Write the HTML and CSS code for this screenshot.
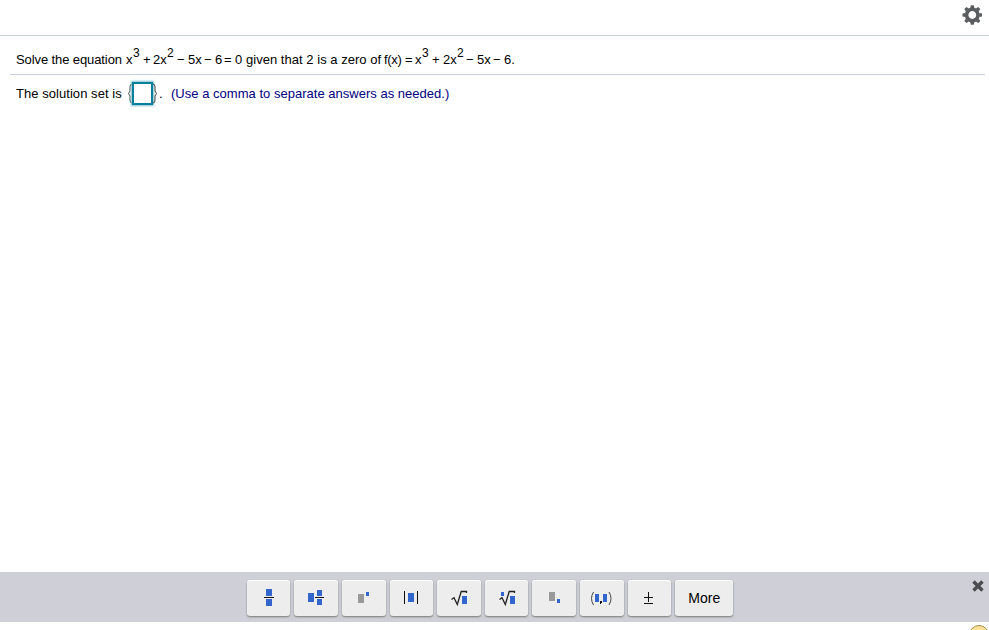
FILE: index.html
```html
<!DOCTYPE html>
<html lang="en">
  <head>
    <meta charset="utf-8" />
    <title>Homework</title>
    <link rel="stylesheet" href="styles.css" />
  </head>
  <body>
    <header class="topbar">
      <svg class="gear" width="20" height="20" viewBox="-10.3 -10 20 20">
        <circle r="5.7" fill="none" stroke="#5b5c5f" stroke-width="3.6" />
        <g fill="#5b5c5f">
          <path id="tooth" d="M-2.1 -7 L-1.4 -9.8 H1.4 L2.1 -7Z" />
          <use href="#tooth" transform="rotate(45)" />
          <use href="#tooth" transform="rotate(90)" />
          <use href="#tooth" transform="rotate(135)" />
          <use href="#tooth" transform="rotate(180)" />
          <use href="#tooth" transform="rotate(225)" />
          <use href="#tooth" transform="rotate(270)" />
          <use href="#tooth" transform="rotate(315)" />
        </g>
      </svg>
    </header>

    <main>
      <div class="question">
        <span class="lead">Solve the equation</span>
        <span>x</span><sup>3</sup><span>+</span><span>2x</span><sup>2</sup>
        <span>−</span><span>5x</span><span>−</span><span>6</span><span>=</span><span>0</span>
        <span class="given">given that 2 is a zero of</span>
        <span class="func">f(x)</span><span>=</span><span>x</span><sup>3</sup><span>+</span><span>2x</span><sup>2</sup>
        <span>−</span><span>5x</span><span>−</span><span>6.</span>
      </div>
      <div class="answer">
        <span class="label">The solution set is</span>
        <span class="set">
          <svg class="brace" width="4" height="21" viewBox="0 0 4 21"><path d="M4 1Q2 1 2 4V8L.5 10.5L2 13V17Q2 20 4 20" /></svg>
          <input class="box" type="text" />
          <svg class="brace" width="4" height="21" viewBox="0 0 4 21"><path d="M0 1Q2 1 2 4V8L3.5 10.5L2 13V17Q2 20 0 20" /></svg>
        </span>
        <span class="dot">.</span>
        <span class="hint">(Use a comma to separate answers as needed.)</span>
      </div>
    </main>

    <footer class="palette">
      <div class="keys">
        <button class="key">
          <svg width="43" height="36"><path class="blue" d="M19 9h6v7h-6zM19 19h6v7h-6z" /><path class="ink" d="M17 17h10v1H17z" /></svg>
        </button>
        <button class="key">
          <svg width="43" height="36"><path class="blue" d="M14 13h6v9h-6zM23 10h5v6h-5zM23 19h5v6h-5z" /><path class="ink" d="M21 17h9v1h-9z" /></svg>
        </button>
        <button class="key">
          <svg width="43" height="36"><path class="gray" d="M16 14h6v9h-6z" /><path class="blue" d="M24 12h3v4h-3z" /></svg>
        </button>
        <button class="key">
          <svg width="43" height="36"><path class="ink" d="M14 11h1v13h-1zM27 11h1v13h-1z" /><path class="blue" d="M18 13h6v9h-6z" /></svg>
        </button>
        <button class="key">
          <svg width="43" height="36"><path class="root" d="M14.5 19.5L17 17.8L20.3 24.5L24.2 11.5H29.5V13" /><path class="blue" d="M25 16h5v8h-5z" /></svg>
        </button>
        <button class="key">
          <svg width="43" height="36"><path class="root" d="M14.5 19.5L17 17.8L20.3 24.5L24.2 11.5H29.5V13" /><path class="blue" d="M16 12h3v4h-3zM25 16h5v8h-5z" /></svg>
        </button>
        <button class="key">
          <svg width="43" height="36"><path class="gray" d="M17 12h6v9h-6z" /><path class="blue" d="M25 19h3v4h-3z" /></svg>
        </button>
        <button class="key">
          <svg width="43" height="36"><path class="paren" d="M13.5 12Q9.5 18.5 13.5 25M29 12Q33 18.5 29 25" /><path class="blue" d="M15 14h4v8h-4zM23 14h4v8h-4z" /><path class="ink" d="M20 21h2v2h-1v1h-1z" /></svg>
        </button>
        <button class="key">
          <svg width="43" height="36"><path class="ink" d="M16 17h9v1h-9zM20 12h1v10h-1zM16 23h9v1h-9z" /></svg>
        </button>
        <button class="key more">More</button>
      </div>
      <svg class="close" width="12" height="12" viewBox="0 0 12 12"><path d="M1.5 1.5L10.5 10.5M10.5 1.5L1.5 10.5" /></svg>
    </footer>
    <div class="below"><span class="badge"></span></div>
  </body>
</html>
```

FILE: styles.css
```css
* {
  box-sizing: border-box;
}
body {
  display: flex;
  flex-direction: column;
  height: 630px;
  margin: 0;
  overflow: hidden;
  background: #fff;
  color: #000;
  font-family: "Liberation Sans", Arial, sans-serif;
  font-size: 13px;
}

/* top bar */
.topbar {
  display: flex;
  justify-content: flex-end;
  height: 36px;
  padding: 5px 7px 0 0;
  border-bottom: 1px solid #c9cede;
}

/* exercise */
main {
  flex: 1;
  padding: 0 4px 0 10px;
}
.question {
  display: grid;
  grid-template-columns:
    110px 7px 10px 10px 14px 10px 11px 16px 11px 9px 11px 11px
    138px 21px 10px 7px 10px 11px 14px 9px 11px 16px 11px 12px;
  height: 39px;
  padding: 16px 0 0 6px;
  line-height: 15px;
  white-space: nowrap;
  border-bottom: 1px solid #c6cddb;
}
.lead {
  letter-spacing: -0.1px;
}
.given {
  letter-spacing: 0.03px;
}
.func {
  letter-spacing: -0.3px;
}
sup {
  font-size: 12px;
  line-height: 15px;
  position: relative;
  top: -6px;
  vertical-align: baseline;
}
.answer {
  display: flex;
  align-items: center;
  height: 36px;
  padding-left: 6px;
  white-space: nowrap;
}
.label {
  width: 112px;
  letter-spacing: 0.05px;
}
.set {
  display: flex;
  align-items: center;
  width: 31px;
}
.brace {
  flex: none;
  fill: none;
  stroke: #444;
}
.box {
  width: 21px;
  height: 23px;
  margin: 0;
  padding: 0;
  border: 2px solid #087f9c;
  outline: none;
  box-shadow: 0 0 2px 1px #7fc0cd;
}
.dot {
  width: 12px;
}
.hint {
  color: #00007f;
  letter-spacing: 0.02px;
}

/* math palette */
.palette {
  display: flex;
  justify-content: space-between;
  height: 50px;
  padding: 8px 5px 0 246.65px;
  background: #cfd0d7;
}
.keys {
  display: flex;
  gap: 4px;
}
.key {
  width: 43.625px;
  height: 36px;
  padding: 0;
  border: 0;
  border-radius: 3px;
  background: #ededed;
  box-shadow: 0 1px 2px #777, inset 0 1px 1px #fff;
}
.key svg {
  display: block;
  shape-rendering: crispEdges;
}
.more {
  width: 58px;
  font: 14px "Liberation Sans", Arial, sans-serif;
}
.blue {
  fill: #3366cc;
}
.gray {
  fill: #999;
}
.ink {
  fill: #111;
}
.root,
.paren {
  fill: none;
  stroke: #222;
  stroke-width: 1.3;
  shape-rendering: geometricPrecision;
}
.paren {
  stroke: #444;
  stroke-width: 1;
}
.close {
  fill: none;
  stroke: #4b4c51;
  stroke-width: 3.4;
}
.below {
  display: flex;
  justify-content: flex-end;
  height: 8px;
  padding: 3px 0 0;
  overflow: hidden;
}
.badge {
  flex: none;
  width: 20px;
  height: 20px;
  border: 1px solid #a98a4c;
  border-radius: 50%;
  background: #fbe295;
}
```
